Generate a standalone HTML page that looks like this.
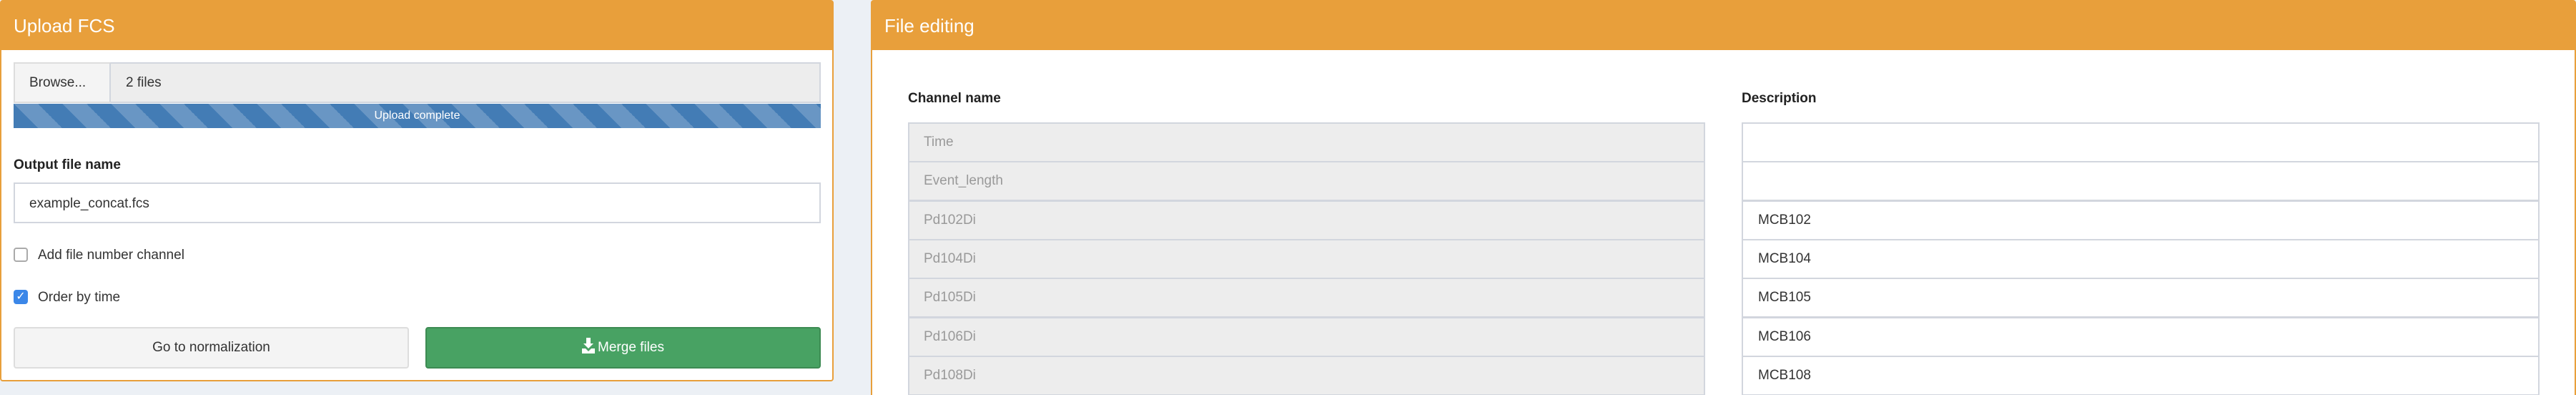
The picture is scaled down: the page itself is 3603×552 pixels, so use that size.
<!DOCTYPE html>
<html><head><meta charset="utf-8"><style>
*{box-sizing:border-box;margin:0;padding:0}
html,body{width:3603px;height:552px;overflow:hidden}
body{background:#ecf0f5;position:relative;font-family:"Liberation Sans",sans-serif;color:#333}
.abs{position:absolute}
.panel{position:absolute;background:#fff;border:2px solid #e89f3b;border-radius:4px}
.hdr{position:absolute;left:0;top:0;right:0;height:68px;background:#e89f3b;color:#fff;font-size:26px;line-height:68px;padding-left:17px}
.t{font-size:19px;line-height:1}
.row{position:absolute;height:56px;border:2px solid #d2d6de;font-size:19px;line-height:52px}
</style></head><body>
<div class="panel" style="left:0;top:0;width:1166px;height:533px">
  <div class="hdr">Upload FCS</div>
</div>
<div class="abs" style="left:19px;top:87px;width:1129px;height:57px;background:#ededed;border:2px solid #d2d6de"></div>
<div class="abs" style="left:19px;top:87px;width:136px;height:57px;background:#f4f4f4;border:2px solid #ddd;border-right:2px solid #d2d6de"></div>
<div class="abs t" style="left:41px;top:106px">Browse...</div>
<div class="abs t" style="left:176px;top:106px">2 files</div>
<div class="abs" style="left:19px;top:145px;width:1129px;height:34px;background-color:#437cb5;background-image:linear-gradient(45deg,rgba(255,255,255,.2) 25%,transparent 25%,transparent 50%,rgba(255,255,255,.2) 50%,rgba(255,255,255,.2) 75%,transparent 75%,transparent);background-size:68px 68px;color:#fff;font-size:16px;line-height:34px;text-align:center">Upload complete</div>
<div class="abs t" style="left:19px;top:221px;font-weight:bold;color:#222">Output file name</div>
<div class="abs" style="left:19px;top:255px;width:1129px;height:57px;background:#fff;border:2px solid #d2d6de"></div>
<div class="abs t" style="left:41px;top:275px">example_concat.fcs</div>
<div class="abs" style="left:19px;top:346px;width:20px;height:20px;border:2px solid #aaa;border-radius:4px;background:#fff"></div>
<div class="abs t" style="left:53px;top:347px">Add file number channel</div>
<div class="abs" style="left:19px;top:405px;width:20px;height:20px;border-radius:4px;background:#3b87e8;color:#fff;font-size:16px;line-height:20px;text-align:center">✓</div>
<div class="abs t" style="left:53px;top:406px">Order by time</div>
<div class="abs" style="left:19px;top:457px;width:553px;height:58px;background:#f4f4f4;border:2px solid #ddd;border-radius:4px;font-size:19px;line-height:54px;text-align:center">Go to normalization</div>
<div class="abs" style="left:595px;top:457px;width:553px;height:58px;background:#48a263;border:2px solid #3d8b53;border-radius:4px;color:#fff;font-size:19px;line-height:54px;text-align:center"><svg width="18" height="22" viewBox="0 0 18 22" style="vertical-align:-3px;margin-right:4px"><path d="M6 0h6v8h4l-7 7-7-7h4z" fill="#fff"/><path d="M0 15h5l4 4 4-4h5v7H0z" fill="#fff"/></svg>Merge files</div>

<div class="panel" style="left:1218px;top:0;width:2385px;height:552px;border-bottom:none;border-radius:4px 4px 0 0">
  <div class="hdr">File editing</div>
</div>
<div class="abs t" style="left:1270px;top:128px;font-weight:bold;color:#222">Channel name</div>
<div class="abs t" style="left:2436px;top:128px;font-weight:bold;color:#222">Description</div>

<div class="row" style="left:1270px;top:171px;width:1115px;background:#ededed;color:#999;padding-left:20px">Time</div>
<div class="row" style="left:1270px;top:225px;width:1115px;background:#ededed;color:#999;padding-left:20px">Event_length</div>
<div class="row" style="left:1270px;top:280px;width:1115px;background:#ededed;color:#999;padding-left:20px">Pd102Di</div>
<div class="row" style="left:1270px;top:334px;width:1115px;background:#ededed;color:#999;padding-left:20px">Pd104Di</div>
<div class="row" style="left:1270px;top:388px;width:1115px;background:#ededed;color:#999;padding-left:20px">Pd105Di</div>
<div class="row" style="left:1270px;top:443px;width:1115px;background:#ededed;color:#999;padding-left:20px">Pd106Di</div>
<div class="row" style="left:1270px;top:497px;width:1115px;background:#ededed;color:#999;padding-left:20px">Pd108Di</div>

<div class="row" style="left:2436px;top:171px;width:1116px;background:#fff;padding-left:21px"></div>
<div class="row" style="left:2436px;top:225px;width:1116px;background:#fff;padding-left:21px"></div>
<div class="row" style="left:2436px;top:280px;width:1116px;background:#fff;padding-left:21px">MCB102</div>
<div class="row" style="left:2436px;top:334px;width:1116px;background:#fff;padding-left:21px">MCB104</div>
<div class="row" style="left:2436px;top:388px;width:1116px;background:#fff;padding-left:21px">MCB105</div>
<div class="row" style="left:2436px;top:443px;width:1116px;background:#fff;padding-left:21px">MCB106</div>
<div class="row" style="left:2436px;top:497px;width:1116px;background:#fff;padding-left:21px">MCB108</div>
</body></html>
